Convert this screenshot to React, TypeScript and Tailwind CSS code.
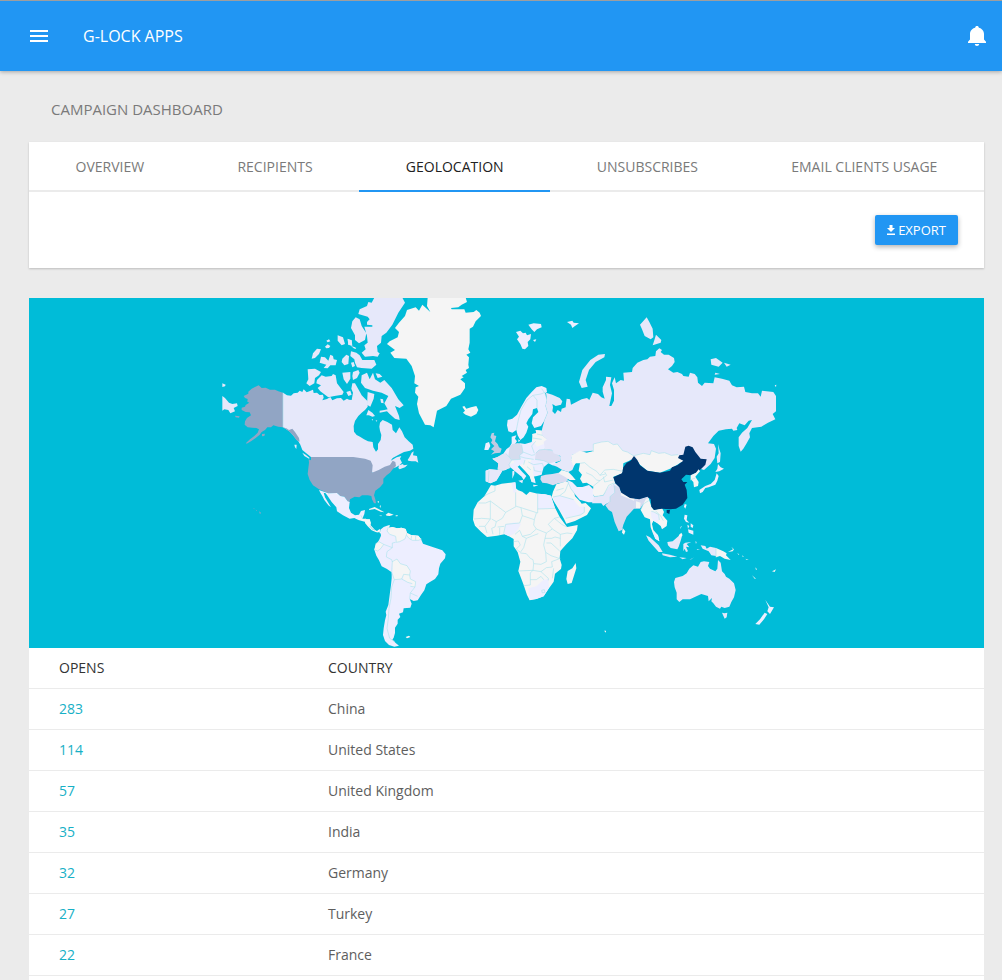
import React from "react";

type Shape = { d: string; fill?: string };
type Region = { name: string; x: number; y: number; shapes: Shape[]; borders?: string };

const NONE = "#f5f5f5";
const LOW = "#edeeff";
const MILD = "#e6e8fa";
const MID = "#d5daef";
const UK = "#c1cae2";
const US = "#91a5c4";
const TOP = "#00366e";

// Every region is drawn at three units per pixel, from its own origin.
const regions: Region[] = [
  {
    name: "north-america",
    x: 215,
    y: 296,
    shapes: [
      { fill: MILD, d: "M22 300L30 306 42 320 52 324 66 322 68 330 56 336 60 346 46 352 40 342 28 340 22 344ZM22 262L32 266 30 271 22 273Z" },
      { fill: MILD, d: "M204 290L216 298 228 299 236 292 248 290 254 284 262 288 266 280 275 289 285 285 294 281 296 291 306 290 314 297 324 296 326 305 322 313 336 309 346 303 352 313 366 307 378 306 386 314 396 308 402 311 410 312 414 290 409 278 412 262 420 262 428 276 436 290 440 298 448 306 458 316 458 332 450 342 440 350 430 360 420 375 416 390 417 407 425 417 435 422 447 430 459 436 473 438 475 454 483 467 489 460 489 444 497 432 499 417 495 404 493 392 495 380 503 372 517 378 531 386 533 402 543 412 553 394 561 406 569 424 581 436 593 446 595 458 585 464 567 468 551 476 533 486 527 494 545 484 559 480 555 488 561 500 553 508 543 514 520 520 473 532 460 500 410 488 288 483 272 470 262 462 256 446 250 436 244 430 236 420 226 408 214 400 204 394Z" },
      { fill: MILD, d: "M550 516L552 508 564 504 566 508 578 506 570 514 554 520ZM578 492L584 482 590 470 596 466 594 478 606 480 608 492 610 500 602 496 590 496 580 494Z" },
      { fill: MILD, d: "M262 470L272 476 284 486 282 488 268 480ZM238 446L245 446 244 459 240 454Z" },
      { fill: US, d: "M204 290L190 286 180 281 165 281 152 275 140 276 131 268 120 273 110 278 100 287 100 293 86 300 90 306 98 309 97 317 103 320 92 327 90 332 80 335 80 342 92 348 104 349 108 358 96 366 90 376 89 386 98 394 112 395 124 396 132 400 128 410 118 420 105 430 93 441 95 443 108 436 122 426 134 416 140 408 150 402 157 394 168 394 175 388 190 392 204 394 214 400 222 406 236 420 244 432 254 437 252 426 246 417 240 408 232 398 222 402 214 397 204 394ZM141 414L150 413 148 420 141 421ZM60 359L74 361 72 365 62 364ZM132 646L138 650 135 655ZM122 641L126 643 125 645ZM115 637L119 638 117 640Z" },
      { fill: US, d: "M288 483L415 483 450 488 467 494 473 508 471 530 491 522 509 512 525 507 533 494 541 498 543 510 533 520 525 530 515 538 505 548 505 562 495 574 481 584 477 598 481 610 483 622 477 622 471 610 469 600 459 598 441 598 433 604 419 602 405 610 403 622 398 616 388 602 376 600 366 591 340 592 312 580 294 568 284 552 278 534 280 517 282 500 281 490 288 493Z" },
      { fill: LOW, d: "M312 582L340 592 366 591 376 600 388 602 398 616 404 618 402 636 408 650 420 658 432 656 438 645 450 642 448 654 442 668 430 672 418 666 404 668 384 658 366 646 364 634 350 618 338 600 332 592 326 590 330 604 340 620 348 634 340 628 328 612 322 600 316 590Z" },
      { fill: NONE, d: "M438 660L442 668 452 668 464 672 467 688 480 702 492 710 500 706 512 702 502 714 485 708 472 698 461 686 452 678 430 672ZM462 639L479 633 492 640 508 649 497 647 479 639 463 642ZM512 656L520 650 536 656 524 660 515 659ZM492 658L502 659 498 661ZM542 658L549 658 547 661 542 661ZM488 616L492 616 492 620 488 619ZM494 630L498 628 496 636Z" },
      { fill: MILD, d: "M306 252L320 238 332 242 350 240 354 234 362 238 366 262 386 288 382 296 358 300 340 304 330 296 316 286 308 276 318 268 304 262ZM278 220L300 218 318 228 312 238 300 246 298 262 284 270 274 262 280 250ZM290 188L294 172 306 158 318 160 312 174 300 186ZM318 182L330 184 340 194 346 176 354 180 356 190 366 192 362 208 346 208 338 217 326 216 334 206 314 200ZM334 134L342 130 346 136 338 139ZM330 152L338 145 346 150 342 156 334 157ZM368 118L384 124 390 144 380 148 368 134ZM398 128L410 134 410 148 400 146ZM382 188L394 176 402 180 400 204 388 208 380 198ZM408 200L416 198 420 210 412 214ZM382 230L406 228 406 248 396 264 386 250ZM414 228L430 222 434 230 426 246 414 252 412 240ZM394 288L406 284 410 296 400 300ZM408 150L420 154 418 158Z" },
    ],
    borders: "M204 290V394M438 658L442 668M452 668L461 686",
  },
  {
    name: "greenland",
    x: 345,
    y: 296,
    shapes: [
      { fill: MILD, d: "M88 5L172 5 180 20 160 50 142 86 124 110 110 120 108 140 96 150 98 168 104 172 98 182 84 180 60 182 50 170 62 160 58 148 68 140 66 120 58 92 82 92 82 88 66 86 66 78 74 70 68 62 40 54 44 40 66 30 70 18 80 20ZM32 64L44 70 50 90 64 112 60 132 42 142 30 132 30 118 18 96 22 76ZM18 166L34 170 44 178 52 192 88 192 94 206 80 218 50 216 36 214 30 200 28 190 16 180ZM8 130L20 132 22 150 10 146ZM26 152L34 156 30 160Z" },
      { fill: MILD, d: "M50 238L66 230 74 250 84 230 90 250 106 260 118 252 140 276 160 310 176 328 164 336 150 330 162 360 164 372 150 368 134 354 126 346 104 350 104 344 118 342 128 340 118 322 130 300 110 290 84 284 60 276 48 260ZM92 232L104 234 112 242 98 246ZM106 308L114 310 116 322 108 320ZM68 288L88 294 86 308 76 332 66 326ZM64 358L70 342 82 350 90 360 82 362 72 358ZM80 370L84 370 83 374ZM92 372L97 374 94 377Z" },
      { fill: NONE, d: "M248 5L362 5 366 18 350 26 340 34 318 36 320 40 358 40 362 50 386 48 394 42 404 50 408 60 392 76 384 92 374 98 374 140 370 160 376 170 364 176 372 184 370 206 372 216 362 222 366 230 350 240 356 244 346 250 360 262 360 276 352 288 346 296 318 308 304 330 276 344 266 394 256 388 240 386 222 352 216 324 220 302 210 290 212 274 222 270 208 262 210 240 200 210 184 188 148 186 136 170 150 162 126 144 134 136 158 124 162 108 150 96 162 80 180 60 186 42 212 34 222 44 232 26 256 48 246 30Z" },
      { fill: NONE, d: "M352 332L358 330 364 338 378 334 394 330 400 342 394 354 378 362 362 356 354 350 360 344Z" },
    ],
  },
  {
    name: "south-america",
    x: 365,
    y: 515,
    shapes: [
      { fill: LOW, d: "M46 44L56 36 66 32 74 30 72 38 82 36 96 40 110 38 122 42 126 54 138 60 160 62 168 72 174 86 196 94 214 100 232 106 242 118 240 130 226 146 222 160 220 178 210 192 196 200 184 208 178 226 168 240 158 256 146 258 134 252 140 266 136 278 116 280 114 292 102 296 106 306 98 314 98 326 90 338 90 354 86 368 82 374 92 384 102 392 88 395 72 390 60 378 54 360 56 340 60 316 64 300 62 290 70 270 74 240 78 210 80 190 80 172 66 162 50 154 42 136 34 122 28 104 34 86 42 76 48 62Z" },
      { fill: NONE, d: "M66 36L74 30 72 38 82 36 96 40 110 38 122 42 126 54 138 60 160 62 168 72 160 76 142 76 132 70 124 60 120 72 104 80 94 82 92 64 72 56 68 48ZM32 86L42 80 56 88 48 100 38 108 28 104ZM82 138L96 132 106 146 126 152 136 168 134 180 116 178 110 192 88 194 84 176ZM116 178L134 180 136 192 152 200 150 216 136 214 142 206 128 202 114 192ZM0 14L14 12 18 24 14 34 24 44 36 48 44 42 48 50 34 52 20 46 8 34 0 24ZM122 366L132 362 136 366 126 370Z" },
    ],
    borders:
      "M70 36L66 48 74 58 92 64 94 82 104 80 120 72 124 60 132 70 142 76 160 76 170 72M126 54L124 60M140 62L138 74M152 62L152 76M92 82L82 84 82 98 56 88 42 80 32 86M56 88L48 100 38 108 28 104M82 98L66 110 64 126 80 134 82 140 96 132 106 146 126 152 136 168 134 180 136 192 152 200 150 216 136 214M82 138L80 172 88 194 110 192 116 178 134 180M88 194L80 216 78 250 72 280 70 310 66 340 74 370 90 380M110 192L128 202 142 206M150 216L136 234 134 252M136 234L158 244",
  },
  {
    name: "europe",
    x: 465,
    y: 370,
    shapes: [
      { fill: LOW, d: "M128 150L142 146 156 134 168 112 184 84 200 66 214 52 230 48 244 54 246 66 240 70 246 90 242 108 248 128 238 152 228 168 208 174 200 160 204 142 220 126 216 114 204 118 202 132 190 148 184 160 190 170 184 188 176 202 166 210 158 196 154 180 142 188 130 184 126 166Z" },
      { fill: LOW, d: "M140 200L154 196 150 206 156 214 150 222 166 220 180 222 200 216 204 198 202 192 214 190 212 180 232 182 248 208 240 238 262 240 288 262 286 272 270 276 278 284 262 286 250 280 236 292 232 306 230 314 216 318 204 320 210 330 212 340 200 336 194 318 178 300 164 286 158 290 172 306 184 318 176 330 170 320 148 302 136 292 122 300 112 302 104 316 94 332 76 340 62 334 62 302 74 298 98 300 100 280 82 266 96 262 112 256 124 238 134 230 140 220ZM160 332L174 330 172 340ZM142 304L148 302 148 312 142 326ZM204 344L220 346 206 350ZM160 208L166 212 160 216Z" },
      { fill: NONE, d: "M202 192L214 190 212 180 230 182 232 196 246 208 236 222 216 230 202 212ZM180 270L200 268 196 282 206 292 204 310 210 330 200 336 194 318 178 300 164 286 176 280ZM130 272L148 272 146 280 134 282Z" },
      { fill: "#d5dcee", d: "M134 230L142 222 158 220 170 224 174 248 164 256 166 268 140 270 130 258 132 244Z" },
      { fill: "#e1e4f5", d: "M82 266L96 262 112 252 122 250 140 268 132 284 136 294 118 300 98 296 100 280Z" },
      { fill: "#dcdff2", d: "M212 250L222 240 240 238 262 242 288 262 286 272 254 280 236 272 210 268Z" },
      { fill: MILD, d: "M62 302L74 298 98 300 112 302 104 316 94 332 76 340 62 334Z" },
      { fill: UK, d: "M80 190L88 188 86 196 94 198 90 214 98 222 102 232 110 236 106 248 90 250 78 254 88 244 78 238 88 228 78 218 82 210 76 202Z" },
      { fill: LOW, d: "M62 220L72 216 76 228 70 240 58 240Z" },
      { fill: "#d9dcf1", d: "M228 318L242 314 262 312 280 308 300 314 310 324 304 336 280 340 264 346 246 340 232 338 226 328Z" },
      { fill: MILD, d: "M420-48L418-38 392-24 372 0 362 30 368 50 350 54 342 36 352 0 376-30 400-46Z" },
      { fill: LOW, d: "M153-114L166-118 174-110 182-112 186-104 198-108 196-92 188-84 190-72 180-62 172-64 166-78 156-92 162-100ZM190-136L206-140 228-138 230-128 216-122 208-114 200-122ZM204-90L214-92 210-84ZM306-144L322-148 326-142 342-140 330-132 322-126 318-136Z" },
      { fill: NONE, d: "M290 300L310 306 322 318 332 330 314 330 302 322 280 310Z" },
    ],
    borders:
      "M154 180L160 150 168 120 186 90 204 76 228 72 242 66M204 76L216 90 216 114M230 56L240 70 246 90 242 108 248 128 238 152M232 182L232 196 248 208 240 238 262 242 288 262 286 272M202 204L230 208M216 192L232 196M212 214L200 228 208 250M170 224L174 248 164 256 166 268 140 270 130 258 122 250M174 246L200 256 210 254M166 260L180 264 206 268M180 270L176 284M190 276L206 284 232 280 236 292M206 290L208 302 230 306M186 290L198 300M140 270L132 284 136 294M98 298L118 302M72 302L70 336M210 268L236 272 254 280M212 250L222 240 240 238",
  },
  {
    name: "africa",
    x: 465,
    y: 465,
    shapes: [
      { fill: NONE, d: "M78 60L90 62 110 56 150 52 152 70 160 76 172 80 184 90 194 80 218 86 240 88 258 92 262 106 270 128 284 156 300 178 306 186 338 180 336 196 322 220 304 238 286 258 284 280 290 300 288 312 270 326 266 350 252 370 236 394 214 402 194 406 186 390 176 360 160 318 166 290 158 262 146 244 146 222 132 214 118 208 96 212 66 216 48 200 30 182 24 164 26 134 38 112 58 94Z" },
      { fill: NONE, d: "M264 80L274 58 300 50 312 50 320 72 328 84 330 94 346 110 350 116 362 114 378 130 366 150 330 168 304 176 296 160 282 134 266 108 260 96Z" },
      { fill: LOW, d: "M264 96L284 92 300 96 326 104 336 118 344 126 358 124 358 142 346 150 320 154 302 160 284 134 270 112ZM306 44L322 52 336 66 352 66 372 60 388 76 386 92 396 112 370 112 344 104 332 90 318 72ZM122 178L150 172 168 176 160 192 148 206 132 214 118 206ZM190 370L214 364 236 344 250 342 252 368 236 394 214 402 194 404ZM218 86L240 88 258 92 262 106 270 130 218 132ZM140 54L152 52 154 80 146 84Z" },
      { fill: NONE, d: "M332 294L334 310 320 354 308 357 304 342 308 318 322 310Z" },
    ],
    borders:
      "M90 62L90 78 66 88M66 88L58 94M40 114L62 114 76 108 76 162 50 160 26 162M76 108L122 142 154 124 168 128 218 144M152 82L152 124M218 86L218 144M218 132L270 130M168 128L172 152 164 174 122 178 116 206M122 142L112 160 94 170 80 162M76 162L60 184 42 184M60 184L66 204M94 170L90 186 80 190 84 208M98 186L118 184M104 188L104 210M172 152L208 164 206 180 214 192 196 208 172 214 164 196 150 208M208 164L214 144M214 192L244 204 262 192 250 178 268 160 284 156M262 192L286 208 306 204 322 206M268 160L290 178 306 186M244 204L240 220 260 220 270 216 286 220M286 208L286 244M172 214L184 220 204 212 220 206M146 230L160 228 166 240 154 252 166 262 176 248 184 220M166 264L184 266 196 280 204 284 206 296 228 298 244 290 242 262 236 240 240 220M244 234L258 234 284 258M242 262L258 272 282 280M206 296L204 316 160 318M204 316L228 320 244 308 262 306 260 290 286 280M204 316L196 324 196 360 176 362M196 344L214 344 228 334 236 344M228 320L250 340 250 346M266 310L262 340M230 376L238 374 240 382 232 384ZM264 96L284 92 300 80 312 50M284 92L326 104M274 76L296 70M302 160L346 150 358 142 358 126M306 44L318 72 332 90",
  },
  {
    name: "russia",
    x: 590,
    y: 300,
    shapes: [
      { fill: MILD, d: "M-132 278L-113 284 -91 294 -83 304 -87 314 -103 318 -113 312 -111 322 -113 334 -105 342 -97 330 -87 336 -85 326 -73 322 -72 310 -70 296 -60 298 -57 314 -41 306 -25 298 -9 294 -2 300 8 278 24 282 34 292 44 296 38 275 38 262 48 240 48 230 64 232 60 255 66 280 58 318 64 318 72 302 72 270 66 250 74 232 78 250 92 240 102 242 100 218 126 216 128 204 142 188 160 180 172 178 180 170 196 168 198 154 208 145 216 150 212 156 222 164 236 164 252 174 254 186 246 198 234 208 250 218 262 216 276 222 280 228 296 230 300 218 314 222 322 232 324 248 336 258 344 248 370 250 374 232 396 236 418 242 426 256 440 262 462 260 466 276 486 280 504 280 512 290 516 272 550 276 558 288 558 334 548 342 556 358 534 368 514 380 486 384 478 400 480 412 470 430 460 446 452 455 446 438 446 412 456 398 472 384 486 360 476 362 464 376 448 370 440 384 442 390 430 392 426 386 408 388 386 392 370 408 354 430 372 432 378 446 374 474 362 492 342 510 260 482 130 482 30 450 -31 456 -53 464 -57 480 -45 492 -53 510 -65 516 -83 510 -99 500 -113 495 -87 482 -89 468 -109 460 -113 450 -135 448 -139 426 -129 418 -143 406 -145 394 -143 384 -137 362 -127 338 -133 318 -129 300Z" },
      { fill: MILD, d: "M150 74L170 52 178 66 188 86 190 112 182 118 164 108 156 88ZM198 104L214 120 212 128 188 136 192 124ZM362 178L378 174 398 188 386 200 364 194ZM402 188L422 194 410 200ZM376 218L390 222 374 224ZM384 432L388 448 392 460 390 486 382 490 380 470 386 460ZM554 256L559 254 558 262Z" },
    ],
  },
  {
    name: "asia",
    x: 590,
    y: 430,
    shapes: [
      { fill: NONE, d: "M-55 75L-30 62 -10 68 8 64 10 42 35 36 54 34 70 44 82 42 98 62 112 66 132 78 118 92 100 100 98 130 70 140 76 160 60 170 40 196 14 200 8 190 10 170 -10 158 -22 160 -30 146 -24 134 -34 122 -30 100 -42 100 -50 108 -57 90Z" },
      { fill: MILD, d: "M40 196L56 170 76 160 90 172 88 184 72 196 60 216 48 222 40 228 34 220 6 220 12 200Z" },
      { fill: MID, d: "M70 166L88 172 94 188 136 206 158 204 174 198 176 212 160 222 150 236 132 236 110 260 100 284 96 300 86 304 74 276 66 246 56 240 46 226 60 214 60 200 74 188Z" },
      { fill: NONE, d: "M94 186L134 204 132 212 92 196ZM138 214L152 218 150 234 138 234ZM98 294L106 304 102 314 96 308Z" },
      { fill: NONE, d: "M136 76L160 70 180 74 184 62 206 70 224 68 244 76 264 74 280 92 262 104 240 116 210 128 172 122 150 104 140 90Z" },
      { fill: NONE, d: "M176 204L184 230 192 240 216 234 222 246 218 256 232 272 230 288 216 298 212 288 200 278 190 272 186 282 190 300 204 316 208 334 196 326 188 308 182 292 180 268 164 262 152 240 160 222 168 206Z" },
      { fill: LOW, d: "M182 244L192 246 206 254 208 270 200 278 190 272 184 262ZM188 304L204 316 208 334 196 326Z" },
      { fill: TOP, d: "M132 78L142 90 150 106 172 122 210 128 240 122 246 112 262 106 280 92 264 84 268 76 280 74 286 50 296 47 308 52 316 66 332 86 350 88 346 104 334 116 318 128 302 136 288 134 274 148 280 156 292 156 284 164 290 180 292 204 278 224 258 236 240 238 216 236 204 238 192 240 184 230 182 208 172 200 148 208 120 204 94 188 88 172 76 160 70 142 96 130 100 112 110 98 122 92ZM230 240L240 240 238 252 230 248Z" },
      { fill: NONE, d: "M302 136L318 128 326 118 330 124 316 140 326 156 324 168 312 172 310 156 302 148Z" },
      { fill: LOW, d: "M384 102L392 112 402 116 388 124 376 126 382 116ZM380 130L386 138 382 152 376 164 366 168 356 172 346 174 338 186 330 190 328 180 346 168 362 162 374 150ZM284 222L290 224 286 236 282 230Z" },
    ],
    borders:
      "M10 66L10 42 35 36 54 34 70 44 82 42 98 62 112 66 132 78 136 76 160 70 180 74 184 62 206 70 224 68 244 76 264 74M-30 100L-16 98 0 112 20 124 30 136 44 120 70 118 98 124M-12 128L6 136 20 150 30 152 50 136 44 126M30 152L8 170M40 140L44 156 70 150M30 136L46 132M12 200L40 196 56 166 74 158M74 166L74 188 60 200 60 216M176 212L160 222 152 240M184 244L192 246 206 254 208 270M196 242L212 258 220 272M300 150L316 144",
  },
  {
    name: "oceania",
    x: 630,
    y: 510,
    shapes: [
      { fill: MILD, d: "M132 216L136 204 158 198 170 190 178 176 190 166 204 170 212 156 222 154 238 156 234 168 240 176 256 184 262 176 264 150 272 158 276 184 284 192 288 200 298 206 312 220 317 240 312 262 304 276 298 290 284 294 274 290 270 296 258 290 250 280 244 274 246 264 236 274 234 258 214 252 196 260 180 268 158 268 148 276 140 268 140 248 134 232ZM276 308L284 310 292 308 290 322 284 326Z" },
      { fill: LOW, d: "M406 270L416 284 420 290 432 292 420 312 412 304 416 292ZM404 308L412 312 402 328 388 344 376 342 390 328ZM164 14L172 16 170 30 178 38 168 36 162 26ZM174 58L190 62 190 74 176 68ZM182 40L190 46 188 54 182 50ZM156 48L150 58 152 50ZM172 44L178 48 174 56Z" },
      { fill: MILD, d: "M48 76L60 82 86 106 98 126 86 126 70 108 56 92ZM96 130L120 134 142 140 120 142 98 136ZM112 96L128 94 146 78 156 78 152 92 146 110 142 118 122 114 114 106ZM160 102L166 98 184 96 170 102 178 112 168 110 174 124 168 126 164 116 160 124 160 112ZM212 106L226 108 230 116 240 110 258 114 258 138 244 136 236 124 218 116ZM196 94L200 96 198 102ZM148 142L170 144 158 148ZM178 150L192 142 184 148ZM200 118L210 118 202 120Z" },
      { fill: NONE, d: "M258 114L280 124 290 130 288 136 302 150 284 146 270 138 258 142ZM146 76L154 68 158 76 150 82ZM294 126L312 116 308 124ZM304 110L310 116 312 122ZM322 130L328 133 325 134ZM336 136L342 140 338 140ZM346 146L356 150 350 150ZM366 196L378 206 374 206ZM376 172L381 178 378 180ZM426 184L434 180 438 178 434 186ZM-78 362L-72 362 -72 368Z" },
    ],
    borders: "M258 114V142",
  },
];

function WorldMap() {
  return (
    <svg
      role="img"
      aria-label="Opens by country"
      viewBox="29 298 955 350"
      preserveAspectRatio="xMidYMid slice"
      className="block h-[350px] w-full"
    >
      {regions.map((r) => (
        <g key={r.name} transform={`translate(${r.x} ${r.y}) scale(0.33333)`}>
          {r.shapes.map((s, i) => (
            <path key={i} d={s.d} fill={s.fill} />
          ))}
          {r.borders && <path d={r.borders} fill="none" stroke="#a9e2ec" strokeWidth="1.8" />}
        </g>
      ))}
    </svg>
  );
}

const tabs = ["OVERVIEW", "RECIPIENTS", "GEOLOCATION", "UNSUBSCRIBES", "EMAIL CLIENTS USAGE"];

const rows: [number, string][] = [
  [283, "China"],
  [114, "United States"],
  [57, "United Kingdom"],
  [35, "India"],
  [32, "Germany"],
  [27, "Turkey"],
  [22, "France"],
];

export default function App() {
  return (
    <div className="flex min-h-screen flex-col bg-[#ebebeb] font-['Open_Sans',sans-serif] text-sm text-[#5e5e5e]">
      <header className="flex h-[71px] items-center border-t border-[#9e9e9e] bg-[#2196f3] pl-[30px] pr-4 text-white shadow-[0_1px_4px_rgba(0,0,0,0.3)]">
        <button type="button" aria-label="Open menu" className="flex">
          <svg width="18" height="12" viewBox="0 0 18 12" fill="currentColor">
            <path d="M0 0h18v2H0zM0 5h18v2H0zM0 10h18v2H0z" />
          </svg>
        </button>
        <a href="#" className="ml-[35px] text-base">
          G-LOCK APPS
        </a>
        <button type="button" aria-label="Notifications" className="ml-auto flex">
          <svg width="18" height="20" viewBox="0 0 18 20" fill="currentColor">
            <path d="M9 0C7.9 0 7.2.7 7.2 1.7 4.2 2.3 2 4.700 2 8v5.500L0 15.700V17h18v-1.300L16 13.500V8c0-3.300-2.200-5.700-5.200-6.300C10.800.7 10.100 0 9 0zM6.800 18c.1 1.200 1 2 2.200 2s2.100-.8 2.200-2z" />
          </svg>
        </button>
      </header>

      <main className="flex grow flex-col pl-[29px] pr-[18px]">
        <h1 className="px-[22px] pb-[21px] pt-[26px] text-[15px] leading-6 text-[#7a7a7a]">CAMPAIGN DASHBOARD</h1>

        <section className="bg-white shadow-[0_1px_2px_rgba(0,0,0,0.2)]">
          <div role="tablist" className="flex border-b-2 border-[#ebebeb]">
            {tabs.map((tab) => {
              const active = tab === "GEOLOCATION";
              return (
                <button
                  key={tab}
                  type="button"
                  role="tab"
                  aria-selected={active}
                  className={
                    active
                      ? "-mb-0.5 h-[50px] flex-auto border-b-2 border-[#2196f3] pt-0.5 text-[#212121]"
                      : "h-12 flex-auto pt-0.5 text-[#7a7a7a]"
                  }
                >
                  {tab}
                </button>
              );
            })}
          </div>
          <div className="flex justify-end px-[26px] py-[23px]">
            <button
              type="button"
              className="flex h-[30px] items-center gap-[3px] rounded-xs bg-[#2196f3] px-3 text-[13px] text-white shadow-[0_2px_5px_rgba(0,0,0,0.3)]"
            >
              <svg width="8" height="10" viewBox="0 0 8 10" fill="currentColor">
                <path d="M2.500 0h3v3H8L4 7 0 3h2.500zM0 8.500h8V10H0z" />
              </svg>
              EXPORT
            </button>
          </div>
        </section>

        <section className="mt-[30px] flex grow flex-col bg-white">
          <div className="bg-[#00bcd8]">
            <WorldMap />
          </div>
          <table className="w-full border-collapse text-left">
            <thead>
              <tr className="h-10 border-b border-[#ebebeb] text-[#333333]">
                <th scope="col" className="w-[299px] pl-[30px] font-normal">
                  OPENS
                </th>
                <th scope="col" className="font-normal">
                  COUNTRY
                </th>
              </tr>
            </thead>
            <tbody>
              {rows.map(([opens, country]) => (
                <tr key={country} className="h-[41px] border-b border-[#ebebeb]">
                  <td className="pl-[30px] text-[#18b0c6]">{opens}</td>
                  <td>{country}</td>
                </tr>
              ))}
            </tbody>
          </table>
        </section>
      </main>
    </div>
  );
}
